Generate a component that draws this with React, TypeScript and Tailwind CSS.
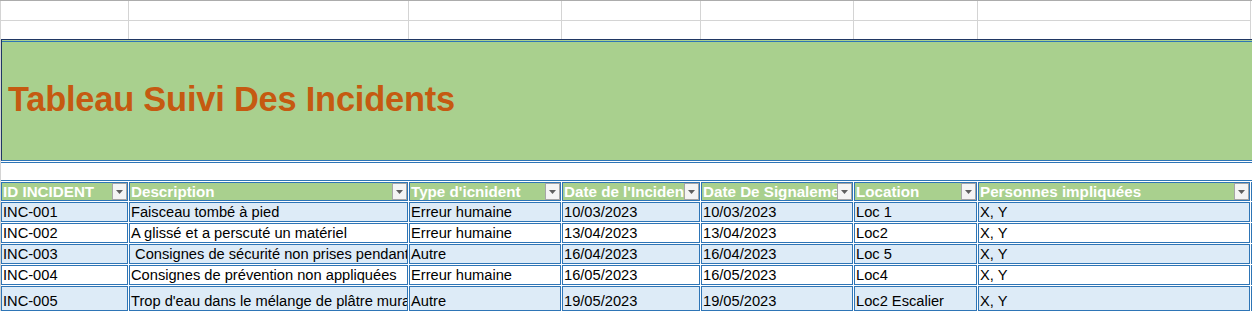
const cols = [127, 279, 152, 138, 152, 123, 272]
const gridCols = [128, 280, 153, 139, 153, 124, 273]

const headers = [
  'ID INCIDENT',
  'Description',
  "Type d'icnident",
  "Date de l'Incident",
  'Date De Signalement',
  'Location',
  'Personnes impliquées',
]

const rows = [
  ['INC-001', 'Faisceau tombé à pied', 'Erreur humaine', '10/03/2023', '10/03/2023', 'Loc 1', 'X, Y'],
  ['INC-002', 'A glissé et a perscuté un matériel', 'Erreur humaine', '13/04/2023', '13/04/2023', 'Loc2', 'X, Y'],
  ['INC-003', ' Consignes de sécurité non prises pendant les travaux', 'Autre', '16/04/2023', '16/04/2023', 'Loc 5', 'X, Y'],
  ['INC-004', 'Consignes de prévention non appliquées', 'Erreur humaine', '16/05/2023', '16/05/2023', 'Loc4', 'X, Y'],
  ['INC-005', "Trop d'eau dans le mélange de plâtre mural", 'Autre', '19/05/2023', '19/05/2023', 'Loc2 Escalier', 'X, Y'],
]

// little excel filter button
const FilterButton = () => (
  <div className="absolute top-0 right-0 w-[15px] h-[17px] border border-[#a6a6a6] bg-[#f4f4f4] flex items-center justify-center">
    <svg width="7" height="4" viewBox="0 0 7 4">
      <path d="M0 0h7L3.5 4z" fill="#5f5f5f" />
    </svg>
  </div>
)

export default function App() {
  return (
    <div className="w-[1252px] h-[311px] overflow-hidden bg-white font-['Liberation_Sans',Arial,sans-serif] border-t border-[#acacac]">
      {/* empty sheet rows on top */}
      <div className="flex border-l border-[#d4d4d4] h-[20px]">
        {gridCols.map((w, i) => (
          <div key={i} className="border-r border-b border-[#d4d4d4] shrink-0 h-full" style={{ width: w }} />
        ))}
      </div>
      <div className="flex border-l border-[#d4d4d4] h-[18px]">
        {gridCols.map((w, i) => (
          <div key={i} className="border-r border-[#d4d4d4] shrink-0 h-full" style={{ width: w }} />
        ))}
      </div>

      <div className="border-l border-[#d4d4d4]">
        {/* banner */}
        <div className="h-[122px] bg-[#a9d08e] border-l border-t border-b border-l-[#203764] border-t-[#203764] border-b-[#2e75b6] pt-px flex flex-col">
          <div className="flex-1 border-t border-[#2e75b6] flex items-center pl-[6px] pb-[3px]">
            <h1 className="text-[34.4px] font-bold text-[#c55a11] leading-none tracking-[-0.2px]">
              Tableau Suivi Des Incidents
            </h1>
          </div>
        </div>

        {/* blank row */}
        <div className="mt-px h-[19px] border-y border-[#2e75b6]" />

        {/* header */}
        <div className="mt-px flex gap-px">
          {headers.map((t, i) => (
            <div
              key={i}
              className="relative shrink-0 h-[19px] border border-[#2e75b6] bg-[#a9d08e] overflow-hidden whitespace-nowrap pl-px text-[15.2px] leading-[18px] font-bold text-white"
              style={{ width: cols[i] }}
            >
              {t}
              <FilterButton />
            </div>
          ))}
          <div className="w-px h-[19px] bg-[#2e75b6]" />
        </div>

        {/* data */}
        {rows.map((r, ri) => {
          const bg = ri % 2 === 0 ? 'bg-[#ddebf7]' : 'bg-white'
          const h = ri === rows.length - 1 ? 'h-[25px]' : 'h-[20px]'
          return (
            <div key={ri} className="mt-px flex gap-px">
              {r.map((t, i) => (
                <div
                  key={i}
                  className={`shrink-0 ${h} ${bg} border border-[#2e75b6] overflow-hidden whitespace-pre pl-px flex items-end text-[14.67px] leading-[18px] text-black`}
                  style={{ width: cols[i] }}
                >
                  {t}
                </div>
              ))}
              <div className={`w-px ${h} bg-[#2e75b6]`} />
            </div>
          )
        })}
      </div>
    </div>
  )
}
